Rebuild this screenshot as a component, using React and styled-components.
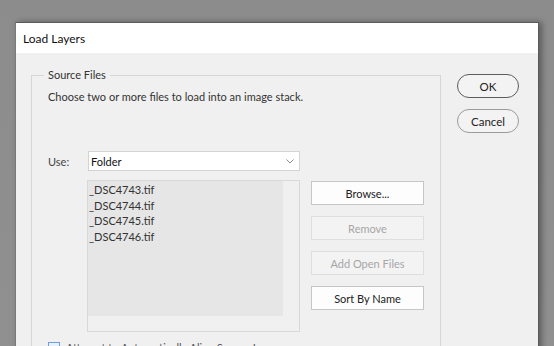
import React from 'react'
import styled, { createGlobalStyle } from 'styled-components'

const GlobalStyle = createGlobalStyle`
  html, body {
    margin: 0;
    padding: 0;
    background: #8f8f8f;
  }
  body {
    font-family: Lato, "Noto Sans", "Liberation Sans", sans-serif;
    font-size: 11px;
    color: #222;
  }
`

const Page = styled.div`
  width: 554px;
  height: 346px;
  overflow: hidden;
  padding: 22px 0 0 15px;
  box-sizing: border-box;
  background: linear-gradient(#8c8c8c, #909090);
`

const Dialog = styled.div`
  width: 524px;
  height: 400px;
  background: #f0f0f0;
  border: 1px solid #5a5a5a;
  border-left-color: #7a7a7a;
  box-sizing: border-box;
  box-shadow: 3px 0 6px rgba(0, 0, 0, 0.35);
`

const TitleBar = styled.div`
  height: 30px;
  background: #fff;
  display: flex;
  align-items: center;
  padding-left: 7px;
  font-size: 12px;
  color: #111;
`

const Body = styled.div`
  display: flex;
  align-items: flex-start;
  padding: 14px 0 0 15px;
`

const Group = styled.fieldset`
  width: 410px;
  height: 320px;
  margin: 0;
  padding: 0 0 0 16px;
  border: 1px solid #d6d6d6;
  box-sizing: border-box;
`

const Legend = styled.legend`
  margin-left: -4px;
  padding: 0 4px;
  line-height: 16px;
  color: #333;
`

const Hint = styled.p`
  margin: 6px 0 0;
  line-height: 16px;
  color: #333;
`

const UseRow = styled.div`
  display: flex;
  align-items: center;
  margin-top: 46px;
`

const UseLabel = styled.span`
  width: 40px;
  color: #444;
`

const Select = styled.div`
  width: 212px;
  height: 20px;
  box-sizing: border-box;
  background: #fff;
  border: 1px solid #d4d4d4;
  display: flex;
  align-items: center;
  justify-content: space-between;
  padding: 0 5px 0 2px;
  color: #111;
`

const FilesRow = styled.div`
  display: flex;
  align-items: flex-start;
  margin-top: 9px;
  margin-left: 39px;
`

const FileList = styled.div`
  width: 213px;
  height: 152px;
  box-sizing: border-box;
  border: 1px solid #d8d8d8;
  display: grid;
  grid-template-columns: 1fr 16px;
  grid-template-rows: 1fr 15px;
  background: #f0f0f0;
`

const Viewport = styled.div`
  background: #e6e6e6;
  padding-top: 1px;
`

const FileName = styled.div`
  line-height: 15.5px;
  padding-left: 1px;
  color: #333;
`

const ButtonColumn = styled.div`
  display: flex;
  flex-direction: column;
  gap: 11px;
  margin-left: 11px;
  margin-top: 1px;
`

const Button = styled.div`
  width: 113px;
  height: 24px;
  box-sizing: border-box;
  background: ${p => (p.disabled ? '#f3f3f3' : '#fdfdfd')};
  border: 1px solid ${p => (p.disabled ? '#dedede' : '#c6c6c6')};
  color: ${p => (p.disabled ? '#a6a6a6' : '#222')};
  display: flex;
  align-items: center;
  justify-content: center;
`

const CheckRow = styled.div`
  display: flex;
  align-items: center;
  gap: 6px;
  margin-top: 9px;
  color: #555;
`

const Box = styled.span`
  width: 12px;
  height: 12px;
  box-sizing: border-box;
  border: 1px solid #6f9fd8;
  background: #e8f0fb;
`

const Side = styled.div`
  display: flex;
  flex-direction: column;
  gap: 11px;
  margin: 7px 0 0 16px;
`

const PillButton = styled.div`
  width: 62px;
  height: 24px;
  box-sizing: border-box;
  border-radius: 12px;
  border: 1px solid ${p => (p.primary ? '#5c5c5c' : '#9a9a9a')};
  background: #f3f3f3;
  color: #222;
  font-size: 11.5px;
  display: flex;
  align-items: center;
  justify-content: center;
`

const Chevron = () => (
  <svg width='8' height='5' viewBox='0 0 8 5'>
    <path d='M0.5 0.5 L4 4 L7.5 0.5' fill='none' stroke='#8a8a8a' strokeWidth='1' />
  </svg>
)

const files = ['_DSC4743.tif', '_DSC4744.tif', '_DSC4745.tif', '_DSC4746.tif']

export default function App () {
  return (
    <>
      <GlobalStyle />
      <Page>
        <Dialog>
          <TitleBar>Load Layers</TitleBar>
          <Body>
            <Group>
              <Legend>Source Files</Legend>
              <Hint>Choose two or more files to load into an image stack.</Hint>
              <UseRow>
                <UseLabel>Use:</UseLabel>
                <Select>
                  Folder
                  <Chevron />
                </Select>
              </UseRow>
              <FilesRow>
                <FileList>
                  <Viewport>
                    {files.map(f => <FileName key={f}>{f}</FileName>)}
                  </Viewport>
                </FileList>
                <ButtonColumn>
                  <Button>Browse...</Button>
                  <Button disabled>Remove</Button>
                  <Button disabled>Add Open Files</Button>
                  <Button>Sort By Name</Button>
                </ButtonColumn>
              </FilesRow>
              <CheckRow>
                <Box />
                Attempt to Automatically Align Source Images
              </CheckRow>
            </Group>
            <Side>
              <PillButton primary>OK</PillButton>
              <PillButton>Cancel</PillButton>
            </Side>
          </Body>
        </Dialog>
      </Page>
    </>
  )
}
